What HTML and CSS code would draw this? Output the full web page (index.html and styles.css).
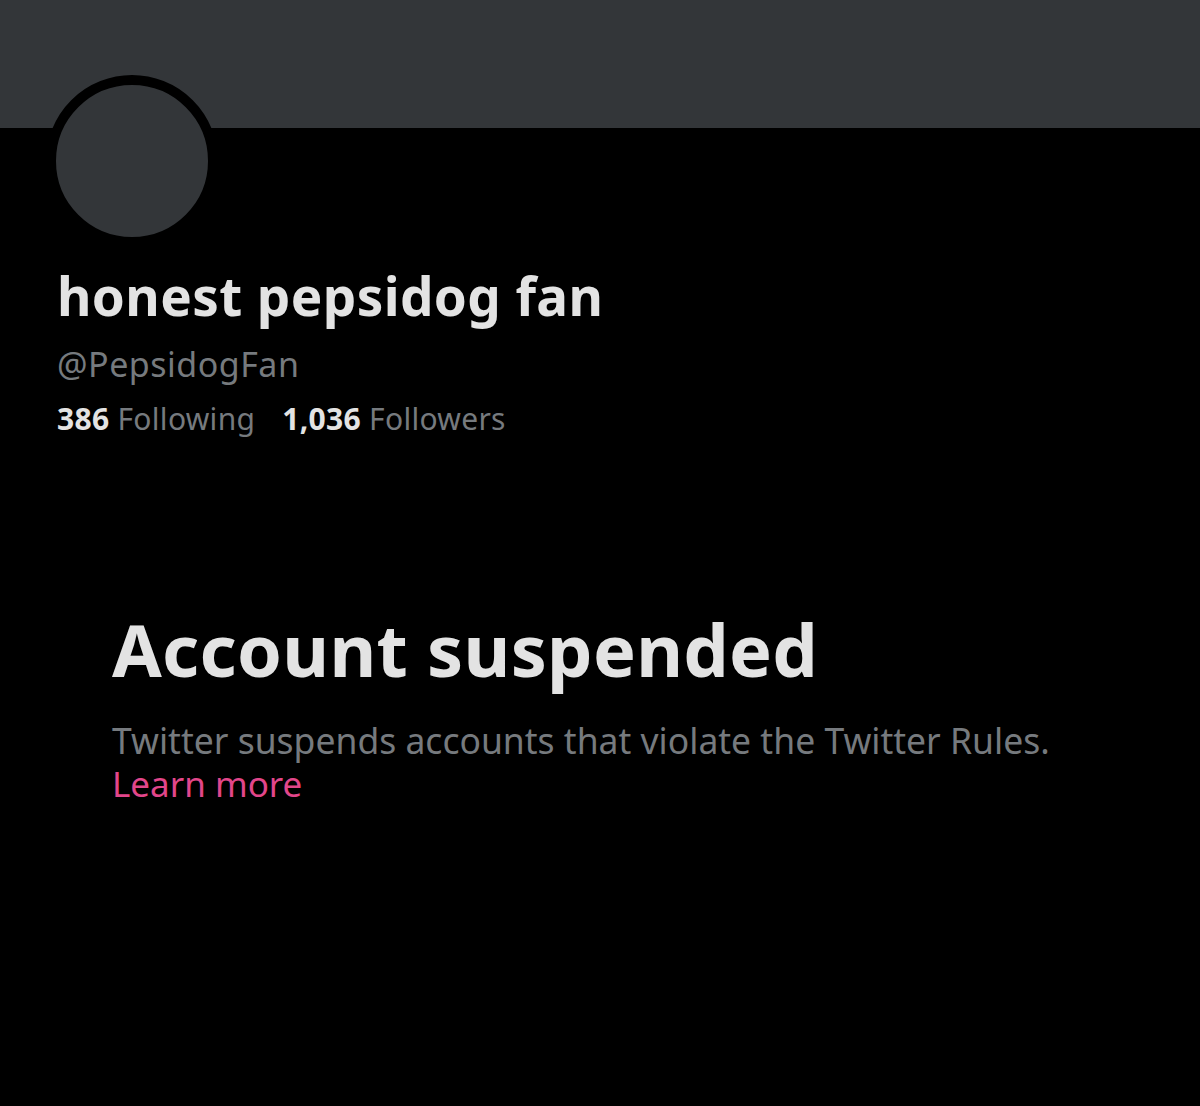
FILE: index.html
```html
<!DOCTYPE html>
<html>
<head>
<meta charset="utf-8">
<link rel="stylesheet" href="styles.css">
</head>
<body>
<div class="banner"></div>
<div class="profile">
  <div class="avatar"></div>
  <h1 class="name">honest pepsidog fan</h1>
  <div class="handle">@PepsidogFan</div>
  <div class="stats">
    <span class="stat"><b>386</b> Following</span>
    <span class="stat"><b>1,036</b> Followers</span>
  </div>
</div>
<div class="notice">
  <h2 class="title">Account suspended</h2>
  <p class="desc"><span class="line">Twitter suspends accounts that violate the Twitter Rules.</span><a class="link" href="#">Learn more</a></p>
</div>
</body>
</html>
```

FILE: styles.css
```css
html, body {
  margin: 0;
  padding: 0;
  background: #000;
  height: 100%;
}
body {
  font-family: "Noto Sans", "Open Sans", sans-serif;
  color: #e3e3e3;
  overflow: hidden;
}
.banner {
  height: 128px;
  background: #333639;
}
.profile {
  padding-left: 46px;
}
.avatar {
  width: 152px;
  height: 152px;
  border-radius: 50%;
  background: #333639;
  border: 10px solid #000;
  margin-top: -53px;
}
.name {
  margin: 19px 0 0 11px;
  font-size: 53px;
  font-weight: 700;
  line-height: 60px;
  color: #e3e3e3;
  letter-spacing: 0.4px;
}
.handle {
  margin: 16px 0 0 11px;
  font-size: 34px;
  line-height: 44px;
  letter-spacing: 0.5px;
  color: #767a7e;
}
.stats {
  margin: 14px 0 0 11px;
  display: flex;
  gap: 27px;
  font-size: 30px;
  line-height: 38px;
  letter-spacing: 0.3px;
  color: #767a7e;
}
.stats b {
  color: #e3e3e3;
  font-weight: 700;
}
.notice {
  padding: 169px 0 0 112px;
}
.title {
  margin: 0;
  font-size: 72px;
  line-height: 84px;
  font-weight: 700;
  color: #e3e3e3;
  letter-spacing: 0.3px;
}
.desc {
  margin: 28px 0 0 0;
  font-size: 35.5px;
  line-height: 43px;
  color: #767a7e;
  display: flex;
  flex-direction: column;
  align-items: flex-start;
}
.line {
  display: block;
  height: 43px;
}
.link {
  display: block;
  height: 43px;
  font-size: 35px;
  color: #e2468a;
  text-decoration: none;
}
```
